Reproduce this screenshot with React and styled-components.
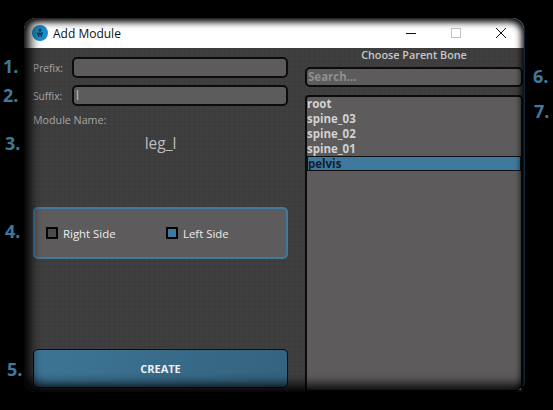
import React from "react";
import styled, { createGlobalStyle } from "styled-components";

const bones = ["root", "spine_03", "spine_02", "spine_01", "pelvis"];
const callouts = [
  { n: "1.", x: 3, y: 54 },
  { n: "2.", x: 3, y: 83 },
  { n: "3.", x: 5, y: 131 },
  { n: "4.", x: 5, y: 219 },
  { n: "5.", x: 7, y: 357 },
  { n: "6.", x: 533, y: 64 },
  { n: "7.", x: 534, y: 99 },
];

function App() {
  return (
    <Page>
      <GlobalStyle />
      {callouts.map((c) => (
        <Callout key={c.n} $x={c.x} $y={c.y}>
          {c.n}
        </Callout>
      ))}
      <Window>
        <TitleBar>
          <AppIcon viewBox="0 0 16 16">
            <circle cx="8" cy="8" r="8" fill="#1b8ccb" />
            <circle cx="8" cy="5.2" r="1.6" fill="#16405c" />
            <path d="M5 7.5h6v2h-1V12H8.6V10H7.4v2H6V9.5H5z" fill="#16405c" />
          </AppIcon>
          <WindowTitle>Add Module</WindowTitle>
          <WindowButtons>
            <svg width="12" height="12" viewBox="0 0 12 12">
              <path d="M1 6.5h10" stroke="#111" strokeWidth="1" />
            </svg>
            <svg width="12" height="12" viewBox="0 0 12 12">
              <rect x="1.5" y="1.5" width="9" height="9" fill="none" stroke="#c4c4c4" />
            </svg>
            <svg width="12" height="12" viewBox="0 0 12 12">
              <path d="M1 1l10 10M11 1L1 11" stroke="#111" strokeWidth="1" />
            </svg>
          </WindowButtons>
        </TitleBar>
        <Content>
          <LeftPanel>
            <FieldRow>
              <FieldLabel>Prefix:</FieldLabel>
              <Field />
            </FieldRow>
            <FieldRow>
              <FieldLabel>Suffix:</FieldLabel>
              <Field>l</Field>
            </FieldRow>
            <NameLabel>Module Name:</NameLabel>
            <ModuleName>leg_l</ModuleName>
            <SideGroup>
              <SideOption>
                <CheckBox />
                Right Side
              </SideOption>
              <SideOption>
                <CheckBox $checked />
                Left Side
              </SideOption>
            </SideGroup>
            <CreateButton>CREATE</CreateButton>
          </LeftPanel>
          <RightPanel>
            <PanelTitle>Choose Parent Bone</PanelTitle>
            <SearchBox>Search...</SearchBox>
            <BoneList>
              {bones.map((b) => (
                <BoneItem key={b} $selected={b === "pelvis"}>
                  {b}
                </BoneItem>
              ))}
            </BoneList>
          </RightPanel>
        </Content>
      </Window>
    </Page>
  );
}

export default App;

const GlobalStyle = createGlobalStyle`
  html, body {
    margin: 0;
    background: #000;
  }
`;

const Page = styled.div`
  position: relative;
  width: 553px;
  height: 410px;
  padding: 18px 0 0 24px;
  box-sizing: border-box;
  overflow: hidden;
  background: #000;
  font-family: "Open Sans", sans-serif;
`;

const Callout = styled.div`
  position: absolute;
  left: ${(props) => props.$x}px;
  top: ${(props) => props.$y}px;
  font-size: 18px;
  line-height: 24px;
  font-weight: 700;
  color: #3f7a9e;
`;

const Window = styled.div`
  position: relative;
  width: 500px;
  height: 374px;
  border-radius: 12px;
  box-shadow: 1px 0 0 #10283a;
  background-color: #3f3f3f;
  background-image: repeating-linear-gradient(
      0deg,
      rgba(0, 0, 0, 0.05) 0 1px,
      transparent 1px 5px
    ),
    repeating-linear-gradient(
      90deg,
      rgba(0, 0, 0, 0.05) 0 1px,
      transparent 1px 5px
    );

  /* soft black edge over the whole window, heavier on the left and bottom */
  &::after {
    content: "";
    position: absolute;
    inset: 0;
    border-radius: 12px;
    box-shadow: inset 6px -7px 12px 0 #000, inset -2px 4px 7px 0 #000;
    pointer-events: none;
  }
`;

const TitleBar = styled.div`
  height: 30px;
  display: flex;
  align-items: center;
  padding: 0 17px 0 8px;
  border-radius: 12px 12px 0 0;
  background: #fff;
`;

const AppIcon = styled.svg`
  width: 16px;
  height: 16px;
`;

const WindowTitle = styled.div`
  margin-left: 5px;
  flex: 1;
  font-size: 12px;
  color: #111;
`;

const WindowButtons = styled.div`
  display: flex;
  gap: 33px;
  align-items: center;
`;

const Content = styled.div`
  display: flex;
  gap: 17px;
  height: 344px;
  padding-left: 9px;
`;

const LeftPanel = styled.div`
  width: 255px;
  display: flex;
  flex-direction: column;
  padding-top: 9px;
`;

const FieldRow = styled.div`
  display: flex;
  align-items: center;
  height: 21px;
  margin-bottom: 7px;
`;

const FieldLabel = styled.div`
  width: 39px;
  font-size: 10.2px;
  color: #a6a6a6;
`;

const Field = styled.div`
  flex: 1;
  height: 21px;
  box-sizing: border-box;
  border: 2px solid #0c0c0c;
  border-radius: 5px;
  padding-left: 2px;
  background: #5d5b5b;
  font-size: 12px;
  line-height: 17px;
  color: #c4c4c4;
`;

const NameLabel = styled.div`
  font-size: 10.7px;
  line-height: 14px;
  color: #a6a6a6;
`;

const ModuleName = styled.div`
  margin-top: 6px;
  text-align: center;
  font-size: 15.5px;
  line-height: 20px;
  color: #bdbdbd;
`;

const SideGroup = styled.div`
  display: flex;
  align-items: center;
  height: 52px;
  box-sizing: border-box;
  margin-top: 54px;
  padding-left: 11px;
  border: 2px solid #3f7a9e;
  border-radius: 5px;
  background: #5d5b5b;
`;

const SideOption = styled.div`
  width: 122px;
  display: flex;
  align-items: center;
  gap: 5px;
  font-size: 11.4px;
  color: #ececec;
`;

const CheckBox = styled.div`
  width: 12px;
  height: 12px;
  box-sizing: border-box;
  border: 2px solid #050505;
  background: ${(props) => (props.$checked ? "#3f7a9e" : "#4a4a4a")};
`;

const CreateButton = styled.div`
  margin-top: 90px;
  height: 39px;
  box-sizing: border-box;
  display: flex;
  align-items: center;
  justify-content: center;
  border: 1px solid #0a0a0a;
  border-radius: 5px;
  background: linear-gradient(100deg, #3d7596, #34637f);
  font-size: 11px;
  font-weight: 700;
  color: #f0f0f0;
`;

const RightPanel = styled.div`
  width: 218px;
  display: flex;
  flex-direction: column;
`;

const PanelTitle = styled.div`
  height: 19px;
  text-align: center;
  font-size: 10.8px;
  line-height: 14px;
  font-weight: 600;
  color: #c8c8c8;
`;

const SearchBox = styled.div`
  height: 20px;
  box-sizing: border-box;
  border: 2px solid #0c0c0c;
  border-radius: 5px;
  padding-left: 1px;
  background: #5d5b5b;
  font-size: 11.5px;
  line-height: 16px;
  font-weight: 700;
  color: #8f8f8f;
`;

const BoneList = styled.div`
  flex: 1;
  margin-top: 8px;
  box-sizing: border-box;
  border: 2px solid #0c0c0c;
  border-radius: 4px 4px 0 0;
  padding: 0;
  background: #5d5b5b;
`;

const BoneItem = styled.div`
  height: ${(props) => (props.$selected ? "13px" : "15px")};
  margin: ${(props) => (props.$selected ? "0 1px" : "0")};
  font-size: 11.5px;
  line-height: 13px;
  font-weight: 700;
  color: ${(props) => (props.$selected ? "#10202e" : "#d2d2d2")};
  background: ${(props) => (props.$selected ? "#3f7a9e" : "transparent")};
  outline: ${(props) => (props.$selected ? "1px solid #111" : "none")};
`;
